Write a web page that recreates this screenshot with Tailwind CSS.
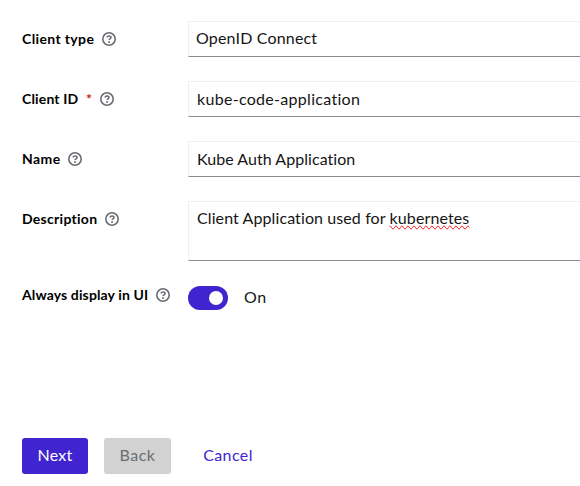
<!DOCTYPE html>
<html lang="en">
<head>
<meta charset="utf-8">
<title>Create client</title>
<script src="https://cdn.jsdelivr.net/npm/@tailwindcss/browser@4"></script>
</head>
<body class="h-[486px] overflow-hidden bg-white font-['Lato','Open_Sans',sans-serif] text-base text-[#151515]">
<svg class="hidden">
  <symbol id="help" viewBox="0 0 14 14">
    <circle cx="7" cy="7" r="6.2" fill="none" stroke="#6a6e73" stroke-width="1.6"/>
    <path d="M5 5.5C5.25 4.4 5.95 4 7 4c1.2 0 2 .6 2 1.55C9 6.8 7.1 6.8 7.1 8.1" fill="none" stroke="#6a6e73" stroke-width="1.6"/>
    <circle cx="7.05" cy="10" r="1" fill="#6a6e73"/>
  </symbol>
</svg>
<form class="flex h-full w-full flex-col pt-[21px] pl-[22px]">
  <div class="flex h-[60px]">
    <div class="flex h-9 w-[166px] shrink-0 items-center text-sm font-bold whitespace-nowrap text-black">
      <span class="w-[80px] tracking-[0.37px]">Client type</span>
      <svg class="size-3.5"><use href="#help"/></svg>
    </div>
    <div class="flex h-9 flex-1 items-center border border-r-0 border-[#f0f0f0] border-b-[#8a8d90] pb-0.5 pl-[7px] tracking-[0.17px]">OpenID Connect</div>
  </div>
  <div class="flex h-[60px]">
    <div class="flex h-9 w-[166px] shrink-0 items-center text-sm font-bold whitespace-nowrap text-black">
      <span class="w-[64px] tracking-[0.16px]">Client ID</span>
      <span class="w-[14px] text-[#c9190b]">*</span>
      <svg class="size-3.5"><use href="#help"/></svg>
    </div>
    <div class="flex h-9 flex-1 items-center border border-r-0 border-[#f0f0f0] border-b-[#8a8d90] pb-px pl-2 tracking-[0.3px]">kube-code-application</div>
  </div>
  <div class="flex h-[60px]">
    <div class="flex h-9 w-[166px] shrink-0 items-center text-sm font-bold whitespace-nowrap text-black">
      <span class="w-[46px] tracking-[0.4px]">Name</span>
      <svg class="size-3.5"><use href="#help"/></svg>
    </div>
    <div class="flex h-9 flex-1 items-center border border-r-0 border-[#f0f0f0] border-b-[#8a8d90] pb-px pl-2 tracking-[0.05px]">Kube Auth Application</div>
  </div>
  <div class="flex h-[85px]">
    <div class="flex h-9 w-[166px] shrink-0 items-center text-sm font-bold whitespace-nowrap text-black">
      <span class="w-[83px] tracking-[0.28px]">Description</span>
      <svg class="size-3.5"><use href="#help"/></svg>
    </div>
    <div class="h-[60px] flex-1 border border-r-0 border-[#f0f0f0] border-b-[#8a8d90] pt-1 pl-2 whitespace-pre tracking-[0.1px]">Client Application used for <span class="tracking-[0.12px] [text-decoration-line:spelling-error]">kubernetes</span></div>
  </div>
  <div class="flex h-[152px]">
    <div class="flex h-[18px] w-[166px] shrink-0 items-center text-sm font-bold whitespace-nowrap text-black">
      <span class="w-[134px] tracking-[0.12px]">Always display in UI</span>
      <svg class="size-3.5"><use href="#help"/></svg>
    </div>
    <div class="flex h-6 items-center">
      <div class="flex h-6 w-10 items-center justify-end rounded-full bg-[#4024d0] pr-[5px]"><div class="size-3.5 rounded-full bg-white"></div></div>
      <span class="pb-0.5 pl-4 tracking-[0.5px]">On</span>
    </div>
  </div>
  <div class="flex h-9 items-center">
    <button type="button" class="h-9 w-[66px] rounded-[3px] bg-[#4024d0] pb-0.5 tracking-[0.3px] text-white">Next</button>
    <button type="button" disabled class="ml-4 h-9 w-[67px] rounded-[3px] bg-[#d2d2d2] pb-0.5 tracking-[0.5px] text-[#6a6e73]">Back</button>
    <button type="button" class="ml-4 h-9 w-[82px] pb-0.5 tracking-[0.4px] text-[#4024d0]">Cancel</button>
  </div>
</form>
</body>
</html>
